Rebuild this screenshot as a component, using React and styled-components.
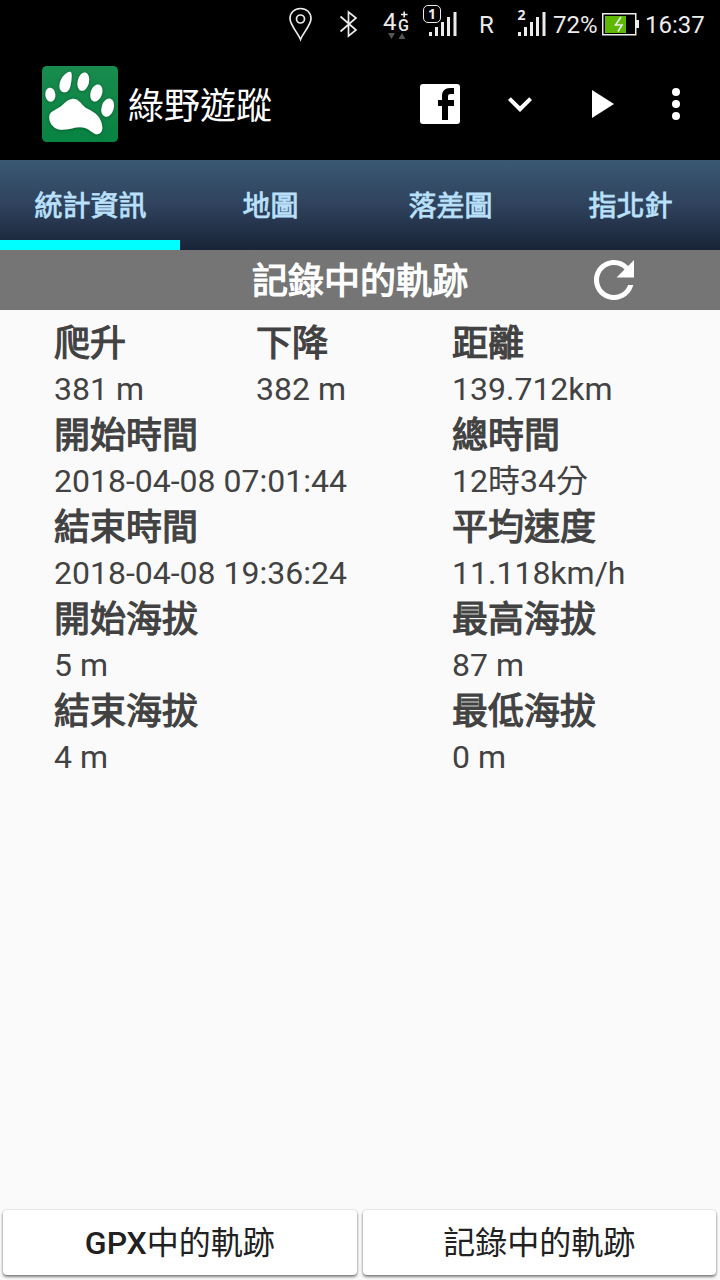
import { useState } from "react";
import styled, { createGlobalStyle } from "styled-components";

const GlobalStyle = createGlobalStyle`
  * {
    box-sizing: border-box;
  }

  body {
    margin: 0;
    background-color: #fafafa;
    font-family: Roboto, "Noto Sans CJK TC", sans-serif;
  }
`;

const Screen = styled.div`
  display: flex;
  flex-direction: column;
  width: 720px;
  height: 1280px;
  overflow: hidden;
  background-color: #fafafa;
`;

const StatusBar = styled.div`
  display: flex;
  align-items: center;
  justify-content: flex-end;
  height: 50px;
  padding-right: 16px;
  background-color: black;
  color: #ececec;
`;

const StatusSvg = styled.svg`
  display: block;
  flex: none;
  margin-right: ${(props) => props.$gap}px;
`;

const StatusText = styled.span`
  width: ${(props) => props.$width}px;
  margin-right: ${(props) => props.$gap || 0}px;
  font-size: 24px;
  line-height: 51px;
  white-space: nowrap;
`;

const Network = styled.div`
  display: flex;
  position: relative;
  width: 28px;
  height: 50px;
  margin-right: 12px;
`;

const NetworkDigit = styled.span`
  width: 15px;
  height: 25px;
  margin-top: 10px;
  font-size: 24px;
  line-height: 25px;
`;

const NetworkLetter = styled.span`
  height: 16px;
  margin-top: 17px;
  font-size: 16px;
  font-weight: 500;
  line-height: 17px;
`;

const NetworkSvg = styled.svg`
  position: absolute;
  left: 0;
  top: 0;
`;

const Signal = styled.div`
  position: relative;
  width: 34px;
  height: 50px;
  margin-right: ${(props) => props.$gap}px;
`;

const SimNumber = styled.span`
  position: absolute;
  left: ${(props) => (props.$boxed ? 0 : -2)}px;
  top: ${(props) => (props.$boxed ? 5 : 7)}px;
  width: ${(props) => (props.$boxed ? 18 : 13)}px;
  height: ${(props) => (props.$boxed ? 18 : 14)}px;
  border: ${(props) => (props.$boxed ? "1.5px solid #ececec" : "none")};
  border-radius: 5px;
  font-family: "Noto Sans", sans-serif;
  font-size: 14px;
  font-weight: 700;
  line-height: 16px;
  text-align: center;
`;

const SignalSvg = styled.svg`
  display: block;
  margin-left: ${(props) => props.$shift}px;
`;

const AppBar = styled.header`
  display: flex;
  align-items: center;
  height: 110px;
  padding: 0 20px 2px 42px;
  background-color: black;
`;

const AppTitle = styled.h1`
  flex: 1;
  margin: 0 0 0 10px;
  padding-top: 5px;
  font-size: 36px;
  font-weight: 400;
  line-height: 52px;
  color: white;
`;

const AppActions = styled.div`
  display: flex;
  gap: 32px;
`;

const IconButton = styled.button`
  display: block;
  width: ${(props) => props.$size || 48}px;
  height: ${(props) => props.$size || 48}px;
  margin-left: ${(props) => props.$pull || 0}px;
  padding: 0;
  border: none;
  background: none;
  color: white;

  svg {
    display: block;
    width: 100%;
    height: 100%;
    fill: currentColor;
  }
`;

const TabBar = styled.nav`
  display: grid;
  grid-template-columns: repeat(4, 1fr);
  height: 90px;
  background: linear-gradient(#3b5872, #2f425d 50%, #182336);
`;

const Tab = styled.button`
  padding: 14px 0 0 1px;
  border: none;
  border-bottom: 10px solid ${(props) => (props.$active ? "#00ffff" : "transparent")};
  background: none;
  font-family: inherit;
  font-size: 28px;
  line-height: 40px;
  color: #b9e1fb;
  -webkit-text-stroke: 0.8px #b9e1fb;
`;

const TitleBar = styled.div`
  display: grid;
  grid-template-columns: 1fr 216px 1fr;
  align-items: center;
  height: 60px;
  background-color: #757575;
`;

const TitleText = styled.h2`
  grid-column: 2;
  margin: 0;
  padding-top: 4px;
  font-size: 36px;
  font-weight: 400;
  line-height: 56px;
  white-space: nowrap;
  color: white;
  -webkit-text-stroke: 1.2px white;
`;

const Stats = styled.main`
  display: grid;
  grid-template-columns: 202px 196px 1fr;
  grid-auto-rows: 92px;
  flex: 1;
  align-content: start;
  padding: 10px 0 0 54px;
`;

const Stat = styled.div`
  grid-column: ${(props) => props.$column};
  color: #424242;
  white-space: nowrap;
`;

const StatLabel = styled.div`
  height: 46px;
  padding-top: 1px;
  font-size: 36px;
  line-height: 46px;
  -webkit-text-stroke: 1.2px #424242;
`;

const StatValue = styled.div`
  height: 46px;
  font-size: 32px;
  line-height: 47px;
`;

const Footer = styled.footer`
  display: grid;
  grid-template-columns: 1fr 1fr;
  gap: 6px;
  height: 72px;
  padding: 2px 4px 5px 3px;
`;

const FooterButton = styled.button`
  padding: 0 0 5px;
  border: none;
  border-radius: 4px;
  background-color: white;
  box-shadow: 0 2px 3px rgba(0, 0, 0, 0.48), 0 0 2px rgba(0, 0, 0, 0.22);
  font-family: inherit;
  font-size: 32px;
  color: #212121;
`;

const Latin = styled.span`
  font-weight: 500;
`;

const tabs = ["統計資訊", "地圖", "落差圖", "指北針"];

const stats = [
  { label: "爬升", value: "381 m", column: 1 },
  { label: "下降", value: "382 m", column: 2 },
  { label: "距離", value: "139.712km", column: 3 },
  { label: "開始時間", value: "2018-04-08 07:01:44", column: "1 / 3" },
  { label: "總時間", value: "12時34分", column: 3 },
  { label: "結束時間", value: "2018-04-08 19:36:24", column: "1 / 3" },
  { label: "平均速度", value: "11.118km/h", column: 3 },
  { label: "開始海拔", value: "5 m", column: "1 / 3" },
  { label: "最高海拔", value: "87 m", column: 3 },
  { label: "結束海拔", value: "4 m", column: "1 / 3" },
  { label: "最低海拔", value: "0 m", column: 3 },
];

function SignalBars({ sim, boxed, shift, gap }) {
  return (
    <Signal $gap={gap}>
      <SimNumber $boxed={boxed}>{sim}</SimNumber>
      <SignalSvg $shift={shift} width="28" height="50" fill="#ececec">
        <rect x="0" y="32" width="3" height="4" />
        <rect x="6" y="27" width="3" height="9" />
        <rect x="12" y="22" width="3" height="14" />
        <rect x="18" y="17" width="3" height="19" />
        <rect x="24.5" y="12" width="3" height="24" />
      </SignalSvg>
    </Signal>
  );
}

function PawLogo() {
  return (
    <svg width="76" height="76" viewBox="0 0 228 228">
      <defs>
        <linearGradient id="paw-bg" x1="0" y1="0" x2="0" y2="1">
          <stop offset="0" stopColor="#198b4e" />
          <stop offset="1" stopColor="#078342" />
        </linearGradient>
        <filter id="paw-shadow" x="-10%" y="-10%" width="120%" height="120%">
          <feDropShadow dx="0" dy="1" stdDeviation="4" floodColor="#00391a" floodOpacity="0.7" />
        </filter>
      </defs>
      <rect width="228" height="228" rx="14" fill="url(#paw-bg)" />
      <g fill="white" filter="url(#paw-shadow)">
        <ellipse cx="25" cy="86" rx="15" ry="21" transform="rotate(-6 25 86)" />
        <path d="M84 17C92 17 89 38 86 56C83 72 76 79 66 79C54 78 50 65 54 49C59 31 73 18 84 17Z" />
        <ellipse cx="124" cy="47" rx="17" ry="28" transform="rotate(13 124 47)" />
        <ellipse cx="163" cy="81" rx="17" ry="26" transform="rotate(20 163 81)" />
        <ellipse cx="197" cy="125" rx="18" ry="28" transform="rotate(17 197 125)" />
        <path d="M22 150C24 134 46 131 59 119C72 106 80 99 93 98C107 98 114 108 124 119C134 130 147 131 159 142C173 153 181 170 181 186C181 200 170 208 158 203C146 198 139 186 119 184C96 183 84 192 56 191C33 189 20 170 22 150Z" />
      </g>
    </svg>
  );
}

export default function App() {
  const [activeTab, setActiveTab] = useState(0);

  return (
    <Screen lang="zh-TW">
      <GlobalStyle />
      <StatusBar>
        <StatusSvg $gap={27} width="24" height="50" fill="none" stroke="#ececec" strokeWidth="1.7">
          <path d="M12.5 39.5C10 33 2 25 2 18.5C2 12.5 6.5 8.5 12.5 8.5S23 12.5 23 18.5C23 25 15 33 12.5 39.5Z" />
          <circle cx="12.5" cy="19" r="4" />
        </StatusSvg>
        <StatusSvg $gap={25} width="19" height="50" fill="none" stroke="#ececec" strokeWidth="1.7">
          <path d="M1.5 16.5L17 30L9.5 36V12L17 18L1.5 31.5" />
        </StatusSvg>
        <Network>
          <NetworkDigit>4</NetworkDigit>
          <NetworkLetter>G</NetworkLetter>
          <NetworkSvg width="28" height="50">
            <path d="M18 14.5H24.5M21.2 11.5V17.5" stroke="#ececec" strokeWidth="1.6" />
            <path d="M5 33H12L8.5 39ZM15.5 39H22.5L19 33Z" fill="#555555" />
          </NetworkSvg>
        </Network>
        <SignalBars sim="1" boxed shift={6} gap={22} />
        <StatusText $width={16} $gap={22}>R</StatusText>
        <SignalBars sim="2" shift={1} gap={2} />
        <StatusText $width={44} $gap={5}>72%</StatusText>
        <StatusSvg $gap={6} width="37" height="50">
          <rect x="0.75" y="13.75" width="33" height="21" fill="black" stroke="#ececec" strokeWidth="1.5" />
          <rect x="34" y="20" width="3" height="8" fill="#ececec" />
          <rect x="3" y="16" width="21" height="17" fill="#5eb800" />
          <path d="M19 17L13.5 25H20L16 31.5" fill="none" stroke="#ececec" strokeWidth="1.6" />
        </StatusSvg>
        <StatusText $width={59}>16:37</StatusText>
      </StatusBar>

      <AppBar>
        <PawLogo />
        <AppTitle>綠野遊蹤</AppTitle>
        <AppActions>
          <IconButton aria-label="Facebook">
            <svg viewBox="0 0 48 48">
              <rect x="4" y="4" width="40" height="40" rx="3" />
              <path
                fill="black"
                d="M26 40V26H22V20H26V16C26 11 29 8 34 8H38V14H34.5C32.8 14 32 14.8 32 16.5V20H38V26H32V40Z"
              />
            </svg>
          </IconButton>
          <IconButton aria-label="展開">
            <svg viewBox="0 0 24 24">
              <path d="M16.59 8.59L12 13.17L7.41 8.59L6 10L12 16L18 10Z" />
            </svg>
          </IconButton>
          <IconButton aria-label="開始">
            <svg viewBox="0 0 24 24">
              <path d="M8 5V19L19 12Z" />
            </svg>
          </IconButton>
          <IconButton aria-label="選單" $pull={-4}>
            <svg viewBox="0 0 24 24">
              <circle cx="12" cy="6" r="2" />
              <circle cx="12" cy="12" r="2" />
              <circle cx="12" cy="18" r="2" />
            </svg>
          </IconButton>
        </AppActions>
      </AppBar>

      <TabBar>
        {tabs.map((tab, index) => (
          <Tab key={tab} $active={index === activeTab} onClick={() => setActiveTab(index)}>
            {tab}
          </Tab>
        ))}
      </TabBar>

      <TitleBar>
        <TitleText>記錄中的軌跡</TitleText>
        <IconButton aria-label="重新整理" $size={60} $pull={116}>
          <svg viewBox="0 0 24 24">
            <path d="M17.65 6.35C16.2 4.9 14.21 4 12 4c-4.42 0-7.99 3.58-7.99 8s3.57 8 7.99 8c3.73 0 6.84-2.55 7.73-6h-2.08c-.82 2.33-3.04 4-5.65 4-3.31 0-6-2.69-6-6s2.69-6 6-6c1.66 0 3.14.69 4.22 1.78L13 11h7V4l-2.35 2.35z" />
          </svg>
        </IconButton>
      </TitleBar>

      <Stats>
        {stats.map((stat) => (
          <Stat key={stat.label} $column={stat.column}>
            <StatLabel>{stat.label}</StatLabel>
            <StatValue>{stat.value}</StatValue>
          </Stat>
        ))}
      </Stats>

      <Footer>
        <FooterButton>
          <Latin>GPX</Latin>中的軌跡
        </FooterButton>
        <FooterButton>記錄中的軌跡</FooterButton>
      </Footer>
    </Screen>
  );
}
